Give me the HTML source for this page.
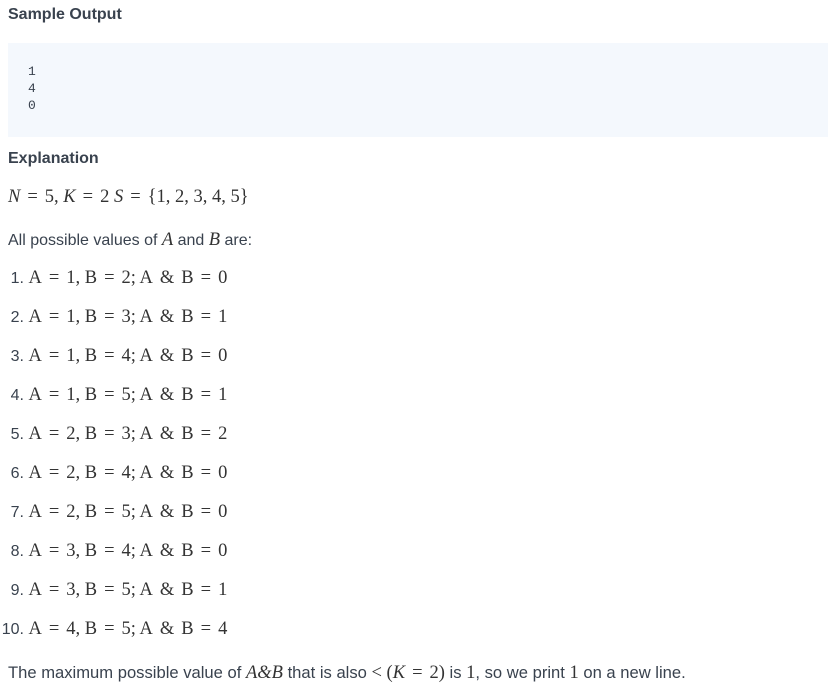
<!DOCTYPE html>
<html><head><meta charset="utf-8"><style>
body{margin:0;width:832px;height:688px;background:#fff;color:#39424e;font-family:"Liberation Sans",sans-serif;font-size:16px;position:relative;overflow:hidden}
.a{position:absolute;white-space:nowrap;line-height:20px}
.b{font-weight:bold;font-size:16px}
.m{font-family:"Liberation Serif",serif;font-size:18.5px;color:#333}
.i{font-style:italic}
.o{margin:0 7px}
.c{margin-right:0}
pre{position:absolute;left:8px;top:43px;width:820px;height:94px;margin:0;background:#f4f8fd;font-family:"Liberation Mono",monospace;font-size:13px;line-height:17px;color:#39424e;box-sizing:border-box;padding:20px 0 0 20px}
.n{display:inline-block;width:24px;text-align:right;font-size:16px}
.t{font-size:16.6px}
</style></head><body>
<div class="a b" style="left:8px;top:5px">Sample Output</div>
<pre>1
4
0</pre>
<div class="a b" style="left:8px;top:149px">Explanation</div>
<div class="a m" style="left:8px;top:187px"><span class="i">N</span><span class="o">=</span>5, <span class="i">K</span><span class="o">=</span>2 <span class="i">S</span><span class="o">=</span>{1, 2, 3, 4, 5}</div>
<div class="a" style="left:8px;top:230px">All possible values of <span class="m i">A</span> and <span class="m i">B</span> are:</div>
<div class="a" style="left:0;top:268px"><span class="n">1.</span> <span class="m">A<span class="o">=</span>1, B<span class="o">=</span>2; A<span class="o">&amp;</span>B<span class="o">=</span>0</span></div>
<div class="a" style="left:0;top:307px"><span class="n">2.</span> <span class="m">A<span class="o">=</span>1, B<span class="o">=</span>3; A<span class="o">&amp;</span>B<span class="o">=</span>1</span></div>
<div class="a" style="left:0;top:346px"><span class="n">3.</span> <span class="m">A<span class="o">=</span>1, B<span class="o">=</span>4; A<span class="o">&amp;</span>B<span class="o">=</span>0</span></div>
<div class="a" style="left:0;top:385px"><span class="n">4.</span> <span class="m">A<span class="o">=</span>1, B<span class="o">=</span>5; A<span class="o">&amp;</span>B<span class="o">=</span>1</span></div>
<div class="a" style="left:0;top:424px"><span class="n">5.</span> <span class="m">A<span class="o">=</span>2, B<span class="o">=</span>3; A<span class="o">&amp;</span>B<span class="o">=</span>2</span></div>
<div class="a" style="left:0;top:463px"><span class="n">6.</span> <span class="m">A<span class="o">=</span>2, B<span class="o">=</span>4; A<span class="o">&amp;</span>B<span class="o">=</span>0</span></div>
<div class="a" style="left:0;top:502px"><span class="n">7.</span> <span class="m">A<span class="o">=</span>2, B<span class="o">=</span>5; A<span class="o">&amp;</span>B<span class="o">=</span>0</span></div>
<div class="a" style="left:0;top:541px"><span class="n">8.</span> <span class="m">A<span class="o">=</span>3, B<span class="o">=</span>4; A<span class="o">&amp;</span>B<span class="o">=</span>0</span></div>
<div class="a" style="left:0;top:580px"><span class="n">9.</span> <span class="m">A<span class="o">=</span>3, B<span class="o">=</span>5; A<span class="o">&amp;</span>B<span class="o">=</span>1</span></div>
<div class="a" style="left:0;top:619px"><span class="n">10.</span> <span class="m">A<span class="o">=</span>4, B<span class="o">=</span>5; A<span class="o">&amp;</span>B<span class="o">=</span>4</span></div>
<div class="a t" style="left:8px;top:663px">The maximum possible value of <span class="m i">A&amp;B</span> that is also <span class="m">&lt; (<span class="i">K</span><span class="o">=</span>2)</span> is <span class="m">1</span>, so we print <span class="m">1</span> on a new line.</div>
</body></html>
